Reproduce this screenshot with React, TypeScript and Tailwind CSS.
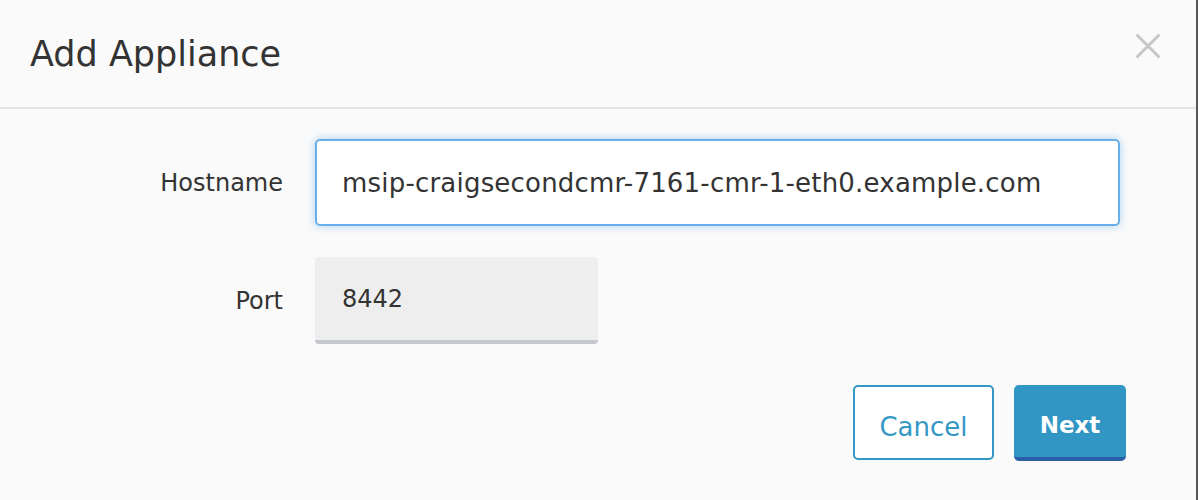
import React, { useState } from 'react';

const App: React.FC = () => {
  const [hostname, setHostname] = useState('msip-craigsecondcmr-7161-cmr-1-eth0.example.com');

  return (
    <div
      className="min-h-screen w-full bg-[#fafafa] text-[#333333] flex"
      style={{ fontFamily: '"DejaVu Sans", Verdana, sans-serif' }}
    >
      <div className="flex-1 flex flex-col">
        {/* Header */}
        <div className="flex items-start justify-between pl-[30px] pr-[35px] pt-[34px] pb-[33px] border-b-2 border-[#e4e4e4]">
          <h1 className="text-[35px] leading-[40px] font-normal">Add Appliance</h1>
          <button className="-mt-[1px] w-[26px] h-[26px] flex items-center justify-center text-[#c6c6c6]" aria-label="Close">
            <svg width="26" height="26" viewBox="0 0 26 26" fill="none" stroke="currentColor" strokeWidth="3">
              <path d="M1.5 1.5 L24.5 24.5 M24.5 1.5 L1.5 24.5" />
            </svg>
          </button>
        </div>

        {/* Form */}
        <div className="flex flex-col pt-[30px] pr-[76px]">
          <div className="flex items-center">
            <label className="w-[283px] text-right text-[24px] leading-[28px]">Hostname</label>
            <input
              type="text"
              value={hostname}
              onChange={(e) => setHostname(e.target.value)}
              className="ml-[32px] flex-1 h-[87px] bg-white border-2 border-[#6aafe8] rounded-[5px] pl-[25px] text-[26px] tracking-[0.2px] text-[#333333] outline-none shadow-[0_0_9px_rgba(102,175,233,0.55)]"
            />
          </div>

          <div className="flex items-center mt-[31px]">
            <label className="w-[283px] text-right text-[24px] leading-[28px]">Port</label>
            <div className="ml-[32px] w-[283px] h-[87px] bg-[#eeeeee] border-b-4 border-[#c4c8ce] rounded-[4px] pl-[27px] flex items-center text-[24px]">
              8442
            </div>
          </div>

          <div className="flex justify-end gap-[20px] mt-[41px] -mr-[6px]">
            <button className="w-[141px] h-[75px] pt-[10px] bg-white border-2 border-[#3597c4] rounded-[5px] text-[#3597c4] text-[26px]">
              Cancel
            </button>
            <button className="w-[112px] h-[76px] pt-[8px] bg-[#3196c3] border-b-4 border-[#2a5ea6] rounded-[5px] text-white text-[23px] font-bold">
              Next
            </button>
          </div>
        </div>
      </div>
      <div className="w-[2px] bg-[#575757]" />
    </div>
  );
};

export default App;
